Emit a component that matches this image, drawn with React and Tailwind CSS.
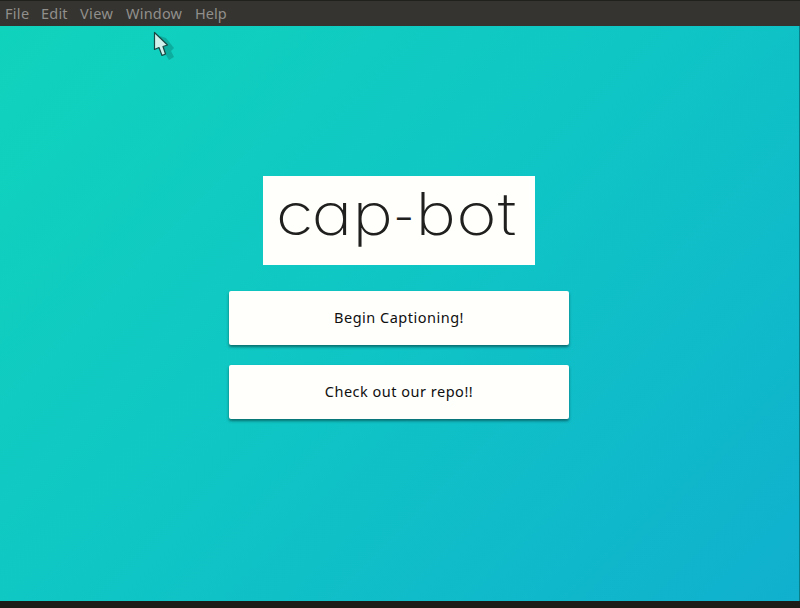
const MENU = [
  { label: 'File', width: 'w-[36px]', spacing: 'tracking-[0.3px]' },
  { label: 'Edit', width: 'w-[39px]', spacing: 'tracking-[0.2px]' },
  { label: 'View', width: 'w-[46px]', spacing: 'tracking-[0.4px]' },
  { label: 'Window', width: 'w-[69px]', spacing: 'tracking-[0.2px]' },
  { label: 'Help', width: 'w-[40px]', spacing: 'tracking-[0px]' },
];

function MenuBar() {
  return (
    <nav className="flex h-[26px] shrink-0 items-center border-t border-[#20201d] bg-[#353430] pl-[5px] text-[14.5px] leading-none text-[#918f8b]">
      {MENU.map((m) => (
        <span key={m.label} className={`${m.width} ${m.spacing} whitespace-nowrap`}>{m.label}</span>
      ))}
    </nav>
  );
}

function Logo() {
  return (
    <div className="h-[89px] w-[272px] bg-[#fffffc]">
      <svg width="272" height="89" viewBox="0 0 272 89" role="img" aria-label="cap-bot">
        <text
          transform="scale(1.17 1)"
          y="59"
          fill="#20201e"
          className="font-['Inter',sans-serif] text-[59px] font-extralight [font-feature-settings:'cv11'_1]"
        >
          <tspan x="11 41.5 76.3">cap</tspan>
          <tspan x="111.6" y="55.5" className="text-[39px] font-light">-</tspan>
          <tspan x="130.2 165.2 200.6" y="59">bot</tspan>
        </text>
      </svg>
    </div>
  );
}

function ActionButton({ children }) {
  return (
    <button className="h-[54px] w-[340px] rounded-[2px] bg-[#fffffc] text-[14.5px] tracking-[0.5px] text-[#101010] shadow-[0_2px_3px_rgba(0,0,0,0.45)]">
      {children}
    </button>
  );
}

function Pointer() {
  return (
    <svg className="absolute left-[153px] top-[31px]" width="26" height="32" viewBox="0 0 26 32">
      <path d="M7 5 L13 7 L21 17 L18 20 L21 26 L16 29 L13 24 L9 25 Z" fill="#08796f" opacity=".4" />
      <path d="M1.5 1.5 V18.5 L6 16.5 L9 24.5 L12.5 23 L10 15.5 L14.5 14 Z" fill="#d0f0eb" stroke="#174844" strokeWidth="1.2" strokeLinejoin="round" />
    </svg>
  );
}

export default function App() {
  return (
    <div className="relative flex h-[608px] w-[800px] flex-col overflow-hidden bg-[#1c1c18] font-['Noto_Sans','Open_Sans',sans-serif]">
      <MenuBar />
      <main className="flex h-[575px] shrink-0 flex-col items-center border-r border-[#087f89] bg-[linear-gradient(135deg,#10d3bc_0%,#0fc5c5_50%,#10b0ce_100%)] pr-px pt-[150px]">
        <Logo />
        <div className="mt-[26px] flex flex-col gap-5">
          <ActionButton>Begin Captioning!</ActionButton>
          <ActionButton>Check out our repo!!</ActionButton>
        </div>
      </main>
      <Pointer />
    </div>
  );
}
